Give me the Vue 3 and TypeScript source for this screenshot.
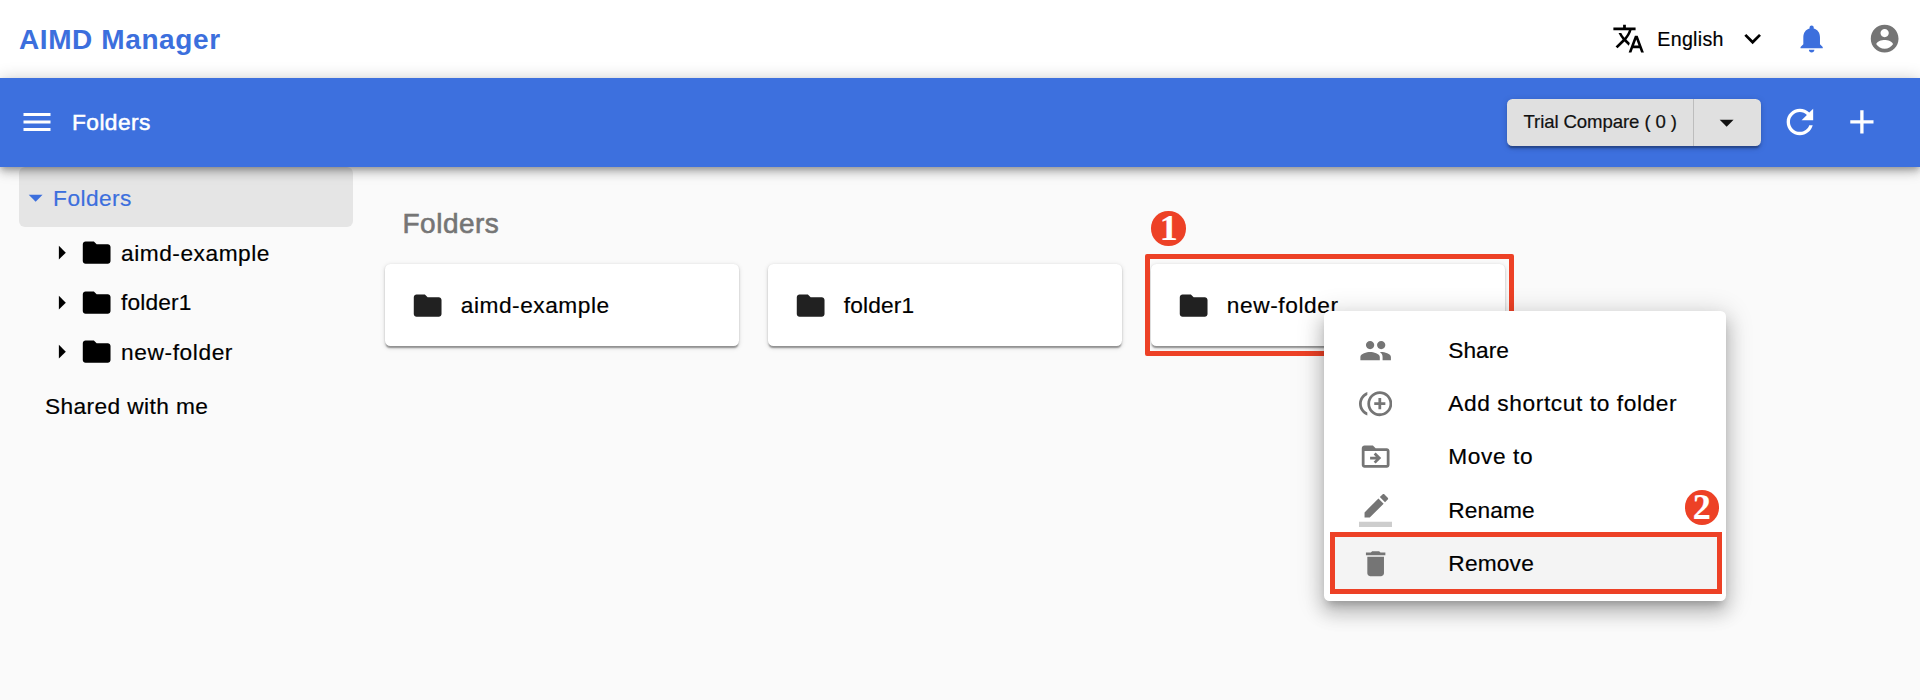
<script setup lang="ts">
interface MenuEntry {
  label: string
  icon: string
  base?: string
  active?: boolean
}

const folders: string[] = ['aimd-example', 'folder1', 'new-folder']

const tracking: Record<string, number> = {
  'aimd-example': 0.53,
  folder1: 0.15,
  'new-folder': 0.6,
  Share: 0,
  'Add shortcut to folder': 0.6,
  'Move to': 0.6,
  Rename: 0.1,
  Remove: 0.2,
}

function spacing(label: string) {
  return { letterSpacing: `${tracking[label] ?? 0.45}px` }
}

const icons = {
  folder: 'M10 4H4c-1.1 0-1.99.9-1.99 2L2 18c0 1.1.9 2 2 2h16c1.1 0 2-.9 2-2V8c0-1.1-.9-2-2-2h-8l-2-2z',
  translate:
    'M12.87 15.07l-2.54-2.51.03-.03c1.74-1.94 2.98-4.17 3.71-6.53H17V4h-7V2H8v2H1v1.99h11.17C11.5 7.92 10.44 9.75 9 11.35 8.07 10.32 7.3 9.19 6.69 8h-2c.73 1.63 1.73 3.17 2.98 4.56l-5.09 5.02L4 19l5-5 3.11 3.11.76-2.04zM18.5 10h-2L12 22h2l1.12-3h4.75L21 22h2l-4.5-12zm-2.62 7l1.62-4.33L19.12 17h-3.24z',
  expand: 'M16.59 8.59L12 13.17 7.41 8.59 6 10l6 6 6-6z',
  bell: 'M12 22c1.1 0 2-.9 2-2h-4c0 1.1.89 2 2 2zm6-6v-5c0-3.07-1.64-5.64-4.5-6.32V4c0-.83-.67-1.5-1.5-1.5s-1.5.67-1.5 1.5v.68C7.63 5.36 6 7.92 6 11v5l-2 2v1h16v-1l-2-2z',
  account:
    'M12 2C6.48 2 2 6.48 2 12s4.48 10 10 10 10-4.48 10-10S17.52 2 12 2zm0 3c1.66 0 3 1.34 3 3s-1.34 3-3 3-3-1.34-3-3 1.34-3 3-3zm0 14.2c-2.5 0-4.71-1.28-6-3.22.03-1.99 4-3.08 6-3.08 1.99 0 5.97 1.09 6 3.08-1.29 1.94-3.5 3.22-6 3.22z',
  menu: 'M3 18h18v-2H3v2zm0-5h18v-2H3v2zm0-7v2h18V6H3z',
  dropDown: 'M7 10l5 5 5-5z',
  dropRight: 'M10 17l5-5-5-5z',
  refresh:
    'M17.65 6.35C16.2 4.9 14.21 4 12 4c-4.42 0-7.99 3.58-7.99 8s3.57 8 7.99 8c3.73 0 6.84-2.55 7.73-6h-2.08c-.82 2.33-3.04 4-5.65 4-3.31 0-6-2.69-6-6s2.69-6 6-6c1.66 0 3.14.69 4.22 1.78L13 11h7V4l-2.35 2.35z',
  add: 'M19 13h-6v6h-2v-6H5v-2h6V5h2v6h6v2z',
}

const menuEntries: MenuEntry[] = [
  {
    label: 'Share',
    icon: 'M16 11c1.66 0 2.99-1.34 2.99-3S17.66 5 16 5c-1.66 0-3 1.34-3 3s1.34 3 3 3zm-8 0c1.66 0 2.99-1.34 2.99-3S9.66 5 8 5C6.34 5 5 6.34 5 8s1.34 3 3 3zm0 2c-2.33 0-7 1.17-7 3.5V19h14v-2.5c0-2.33-4.67-3.5-7-3.5zm8 0c-.29 0-.62.02-.97.05 1.16.84 1.97 1.97 1.97 3.45V19h6v-2.5c0-2.33-4.67-3.5-7-3.5z',
  },
  {
    label: 'Add shortcut to folder',
    icon: 'M16 8h-2v3h-3v2h3v3h2v-3h3v-2h-3zM2 12c0-2.79 1.64-5.2 4.01-6.32V3.52C2.52 4.76 0 8.09 0 12s2.52 7.24 6.01 8.48v-2.16C3.64 17.2 2 14.79 2 12zm13-9c-4.96 0-9 4.04-9 9s4.04 9 9 9 9-4.04 9-9-4.04-9-9-9zm0 16c-3.86 0-7-3.14-7-7s3.14-7 7-7 7 3.14 7 7-3.14 7-7 7z',
  },
  {
    label: 'Move to',
    icon: 'M20 6h-8l-2-2H4c-1.1 0-2 .9-2 2v12c0 1.1.9 2 2 2h16c1.1 0 2-.9 2-2V8c0-1.1-.9-2-2-2zm0 12H4V8h16v10zM12.16 12H8v2h4.16l-1.59 1.59L11.99 17 16 13.01 11.99 9l-1.41 1.41L12.16 12z',
  },
  {
    label: 'Rename',
    icon: 'M17.75 7L14 3.25l-10 10V17h3.75l10-10zm2.96-2.96c.39-.39.39-1.02 0-1.41L18.37.29c-.39-.39-1.02-.39-1.41 0L15 2.25 18.75 6l1.96-1.96z',
    base: 'M0 20h24v4H0z',
  },
  {
    label: 'Remove',
    icon: 'M6 19c0 1.1.9 2 2 2h8c1.1 0 2-.9 2-2V7H6v12zM19 4h-3.5l-1-1h-5l-1 1H5v2h14V4z',
    active: true,
  },
]
</script>

<template>
  <div class="page">
    <header class="topbar">
      <h1 class="brand">AIMD Manager</h1>
      <div class="language">
        <svg class="icon" viewBox="0 0 24 24"><path :d="icons.translate" /></svg>
        <span class="language-name">English</span>
        <svg class="icon" viewBox="0 0 24 24"><path :d="icons.expand" /></svg>
      </div>
      <svg class="icon bell" viewBox="0 0 24 24"><path :d="icons.bell" /></svg>
      <svg class="icon account" viewBox="0 0 24 24"><path :d="icons.account" /></svg>
    </header>

    <nav class="toolbar">
      <svg class="icon burger" viewBox="0 0 24 24"><path :d="icons.menu" /></svg>
      <span class="toolbar-title">Folders</span>
      <div class="button-group">
        <button class="compare">Trial Compare ( 0 )</button>
        <button class="more">
          <svg class="icon" viewBox="0 0 24 24"><path :d="icons.dropDown" /></svg>
        </button>
      </div>
      <svg class="icon large refresh" viewBox="0 0 24 24"><path :d="icons.refresh" /></svg>
      <svg class="icon large" viewBox="0 0 24 24"><path :d="icons.add" /></svg>
    </nav>

    <div class="body">
      <aside class="tree">
        <div class="root">
          <svg class="icon" viewBox="0 0 24 24"><path :d="icons.dropDown" /></svg>
          <span>Folders</span>
        </div>
        <div v-for="name in folders" :key="name" class="node">
          <svg class="icon caret" viewBox="0 0 24 24"><path :d="icons.dropRight" /></svg>
          <svg class="icon" viewBox="0 0 24 24"><path :d="icons.folder" /></svg>
          <span class="node-name" :style="spacing(name)">{{ name }}</span>
        </div>
        <div class="shared">Shared with me</div>
      </aside>

      <main class="content">
        <h2 class="heading">Folders</h2>
        <div class="cards">
          <div v-for="(name, i) in folders" :key="name" class="card">
            <svg class="icon" viewBox="0 0 24 24"><path :d="icons.folder" /></svg>
            <span class="card-name" :style="spacing(name)">{{ name }}</span>
            <template v-if="i === 2">
              <div class="outline card-outline"></div>
              <div class="badge card-badge">1</div>
            </template>
          </div>
        </div>
      </main>
    </div>

    <div class="context-menu">
      <div
        v-for="entry in menuEntries"
        :key="entry.label"
        class="entry"
        :class="{ active: entry.active }"
      >
        <svg class="icon" viewBox="0 0 24 24">
          <path :d="entry.icon" />
          <path v-if="entry.base" :d="entry.base" fill-opacity=".36" />
        </svg>
        <span class="entry-label" :style="spacing(entry.label)">{{ entry.label }}</span>
        <template v-if="entry.active">
          <div class="outline entry-outline"></div>
          <div class="badge entry-badge">2</div>
        </template>
      </div>
    </div>
  </div>
</template>

<style>
body {
  margin: 0;
  background: #fafafa;
}
</style>

<style scoped>
.page {
  position: relative;
  width: 1920px;
  height: 700px;
  overflow: hidden;
  background: #fafafa;
  color: #000;
  font-family: 'Liberation Sans', Arial, sans-serif;
  font-size: 22.7px;
  line-height: 32px;
  letter-spacing: 0.45px;
  white-space: nowrap;
  -webkit-text-stroke: 0.2px currentColor;
}

.icon {
  flex: none;
  width: 33.3px;
  height: 33.3px;
  fill: currentColor;
}

.topbar {
  display: flex;
  align-items: center;
  box-sizing: border-box;
  height: 77.6px;
  padding: 0 19px;
  background: #fff;
}

.brand {
  flex: 1;
  margin: 2px 0 0;
  color: #3c6fdd;
  font-size: 28px;
  font-weight: 700;
  letter-spacing: 0.6px;
  -webkit-text-stroke: 0;
}

.language {
  display: flex;
  align-items: center;
}

.language-name {
  width: 78.5px;
  margin-top: 1px;
  margin-left: 12px;
  font-size: 19.6px;
  letter-spacing: 0.3px;
}

.bell {
  margin-left: 26px;
  color: #3c6fdd;
}

.account {
  margin-left: 39.3px;
  color: #757575;
}

.toolbar {
  position: relative;
  z-index: 1;
  display: flex;
  align-items: center;
  box-sizing: border-box;
  height: 89.6px;
  padding: 0 38px 0 18.5px;
  background: #3d70de;
  color: #fff;
  box-shadow:
    0 3px 5.5px -1.4px rgba(0, 0, 0, 0.2),
    0 5.5px 9px rgba(0, 0, 0, 0.16),
    0 1.4px 16px rgba(0, 0, 0, 0.2);
}

.burger {
  width: 36px;
  height: 36px;
}

.toolbar-title {
  flex: 1;
  margin-left: 17.5px;
  -webkit-text-stroke: 0.5px currentColor;
}

.button-group {
  display: flex;
  height: 47px;
  margin-right: 19.5px;
  border-radius: 5.5px;
  background: #e0e0e0;
  box-shadow:
    0 4px 1.4px -2.8px rgba(0, 0, 0, 0.2),
    0 2.8px 2.8px rgba(0, 0, 0, 0.14),
    0 1.4px 7px rgba(0, 0, 0, 0.12);
}

.button-group button {
  display: flex;
  align-items: center;
  box-sizing: border-box;
  padding: 0;
  border: 0;
  background: none;
  color: #111;
  font: inherit;
  letter-spacing: inherit;
}

.button-group .compare {
  width: 187px;
  padding-left: 17px;
  border-right: 1.4px solid #bdbdbd;
  font-size: 18.6px;
  letter-spacing: -0.1px;
  word-spacing: 0;
}

.button-group .more {
  justify-content: center;
  width: 67px;
}

.large {
  width: 39.8px;
  height: 39.8px;
}

.refresh {
  margin-right: 22.4px;
}

.body {
  display: flex;
}

.tree {
  width: 334px;
  margin-left: 19.3px;
}

.root {
  display: flex;
  align-items: center;
  height: 60px;
  margin-bottom: 0.5px;
  border-radius: 6px;
  background: #e5e5e5;
  color: #3c6fdd;
}

.root span {
  margin-top: 1px;
  margin-left: 0.5px;
}

.node {
  display: flex;
  align-items: center;
  height: 49.7px;
  padding-left: 26px;
}

.caret {
  margin-right: 1.2px;
}

.node-name {
  margin-left: 8px;
}

.shared {
  margin: 13.4px 0 0 25.7px;
  letter-spacing: 0.4px;
}

.content {
  margin-left: 32.2px;
}

.heading {
  margin: 41px 0 24px 17px;
  color: #757575;
  font-size: 28px;
  font-weight: 400;
  letter-spacing: 0.5px;
  -webkit-text-stroke: 0.6px currentColor;
}

.cards {
  display: flex;
  gap: 29px;
}

.card {
  position: relative;
  display: flex;
  align-items: center;
  gap: 16px;
  box-sizing: border-box;
  width: 354px;
  height: 82px;
  padding-left: 26px;
  border-radius: 5.5px;
  background: #fff;
  box-shadow:
    0 2.8px 1.4px -1.4px rgba(0, 0, 0, 0.22),
    0 1.4px 2px rgba(0, 0, 0, 0.18),
    0 1.4px 5px rgba(0, 0, 0, 0.14);
}

.card .icon {
  margin-top: 1px;
  fill: #212121;
}

.card-name {
  margin-bottom: 1px;
}

.outline {
  position: absolute;
  box-sizing: border-box;
  border: 5px solid #ed4126;
}

.card-outline {
  top: -10.5px;
  left: -6px;
  width: 369px;
  height: 102px;
  border-radius: 2px;
}

.badge {
  position: absolute;
  width: 34.4px;
  height: 34.4px;
  border-radius: 50%;
  background: #ed4126;
  color: #fff;
  font: 700 36px/35px 'Liberation Serif', serif;
  letter-spacing: 0;
  text-align: center;
}

.card-badge {
  top: -53px;
  left: 0;
}

.context-menu {
  position: absolute;
  z-index: 2;
  top: 311px;
  left: 1324px;
  box-sizing: border-box;
  width: 402px;
  height: 290px;
  padding: 13px 7px;
  border-radius: 5.5px;
  background: #fff;
  box-shadow:
    0 7px 8px -4px rgba(0, 0, 0, 0.22),
    0 11px 18px 1.4px rgba(0, 0, 0, 0.16),
    0 4px 26px 4px rgba(0, 0, 0, 0.14);
}

.entry {
  position: relative;
  display: flex;
  align-items: center;
  gap: 56.5px;
  height: 53.2px;
  padding-left: 27.5px;
}

.entry .icon {
  fill: #757575;
}

.entry-label {
  margin-bottom: 1px;
}

.active {
  background: #f4f4f4;
}

.entry-outline {
  top: -5px;
  left: -1px;
  width: 392px;
  height: 62px;
}

.entry-badge {
  top: -46.5px;
  right: 0;
}
</style>
